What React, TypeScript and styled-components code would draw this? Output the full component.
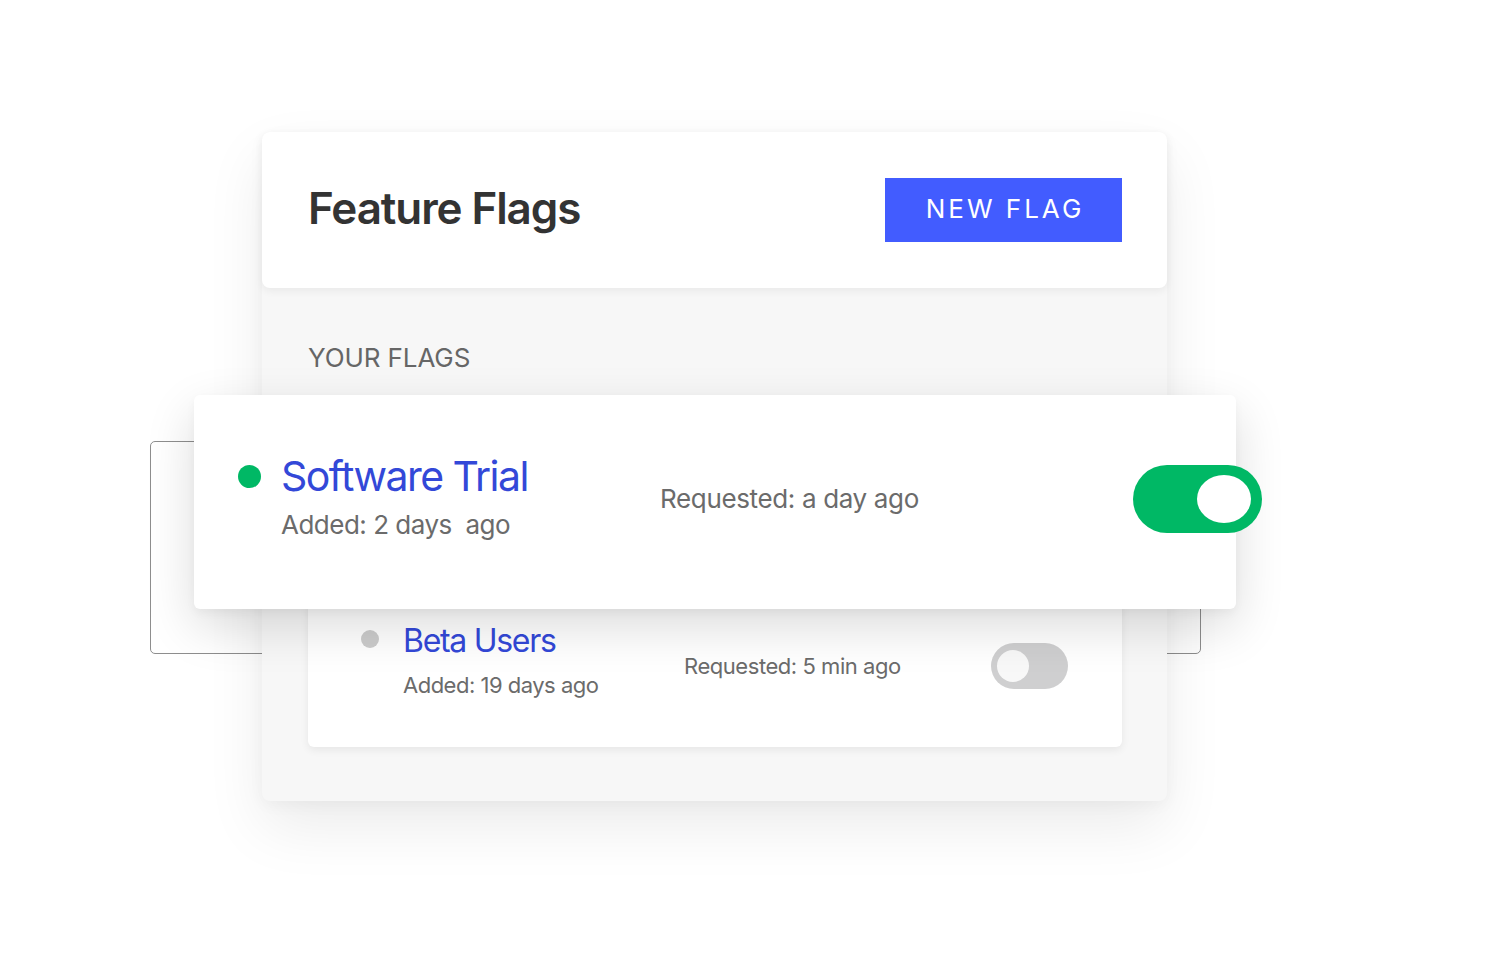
import React from "react";
import styled, { createGlobalStyle } from "styled-components";

const Global = createGlobalStyle`
  html, body { margin: 0; padding: 0; background: #ffffff; }
  body { font-family: Inter, "Liberation Sans", Arial, sans-serif; -webkit-font-smoothing: antialiased; }
  * { box-sizing: border-box; }
`;

const Page = styled.div`
  width: 1498px;
  height: 954px;
  padding: 132px 0 0 262px;
  background: #ffffff;
`;

const Scene = styled.div`
  position: relative;
  width: 905px;
`;

const Outline = styled.div`
  position: absolute;
  left: -112px;
  top: 309px;
  width: 1051px;
  height: 213px;
  border: 1px solid #8e8e8e;
  border-radius: 5px;
`;

const Panel = styled.section`
  position: relative;
  width: 905px;
  height: 669px;
  background: #f7f7f7;
  border-radius: 8px;
  box-shadow: 0 26px 60px rgba(0, 0, 0, 0.08), 0 4px 16px rgba(0, 0, 0, 0.04);
`;

const Header = styled.header`
  height: 156px;
  display: flex;
  align-items: center;
  justify-content: space-between;
  padding: 0 45px 0 46px;
  background: #ffffff;
  border-radius: 8px;
  box-shadow: 0 3px 8px rgba(0, 0, 0, 0.06);
`;

const Title = styled.h1`
  margin: 0 0 4px;
  font-size: 44px;
  font-weight: 600;
  letter-spacing: -1.1px;
  color: #333333;
  line-height: 52px;
`;

const Button = styled.button`
  width: 237px;
  height: 64px;
  border: none;
  border-radius: 0;
  background: #425cff;
  color: #ffffff;
  font-family: inherit;
  font-size: 26px;
  font-weight: 400;
  letter-spacing: 3px;
  padding: 0 0 3px 3px;
`;

const Body = styled.div`
  padding: 55px 45px 54px 46px;
`;

const SectionLabel = styled.h2`
  margin: 0 0 22px;
  font-size: 26px;
  font-weight: 400;
  line-height: 30px;
  letter-spacing: -0.1px;
  color: #666666;
`;

const Card = styled.div<{ $featured?: boolean }>`
  position: relative;
  display: flex;
  align-items: flex-start;
  background: #ffffff;
  border-radius: 6px;
  z-index: ${(p) => (p.$featured ? 2 : 1)};
  margin: ${(p) => (p.$featured ? "0 -114px" : "-27px 0 0")};
  height: ${(p) => (p.$featured ? "214px" : "165px")};
  padding: ${(p) => (p.$featured ? "57px 0 0 44px" : "40px 54px 0 53px")};
  box-shadow: ${(p) =>
    p.$featured
      ? "0 18px 50px rgba(0, 0, 0, 0.14), 0 4px 10px rgba(0, 0, 0, 0.04)"
      : "0 3px 8px rgba(0, 0, 0, 0.07)"};
`;

const Dot = styled.span<{ $on?: boolean }>`
  flex: none;
  width: ${(p) => (p.$on ? "23px" : "18px")};
  height: ${(p) => (p.$on ? "23px" : "18px")};
  margin-top: ${(p) => (p.$on ? "13px" : "8px")};
  border-radius: 50%;
  background: ${(p) => (p.$on ? "#00b865" : "#cccccc")};
`;

const TextCol = styled.div<{ $featured?: boolean }>`
  flex: none;
  display: flex;
  flex-direction: column;
  width: ${(p) => (p.$featured ? "399px" : "305px")};
  padding-left: ${(p) => (p.$featured ? "20px" : "24px")};
`;

const Name = styled.div<{ $featured?: boolean }>`
  color: #3348d8;
  font-size: ${(p) => (p.$featured ? "41px" : "32px")};
  line-height: ${(p) => (p.$featured ? "48px" : "38px")};
  font-weight: 400;
  letter-spacing: ${(p) => (p.$featured ? "-1.55px" : "-1.3px")};
`;

const Added = styled.div<{ $featured?: boolean }>`
  color: #6b6b6b;
  font-size: ${(p) => (p.$featured ? "26px" : "22px")};
  line-height: ${(p) => (p.$featured ? "30px" : "26px")};
  margin-top: ${(p) => (p.$featured ? "10px" : "12px")};
  letter-spacing: -0.5px;
  white-space: pre;
`;

const Requested = styled.div<{ $featured?: boolean }>`
  color: #6b6b6b;
  font-size: ${(p) => (p.$featured ? "26px" : "22px")};
  line-height: ${(p) => (p.$featured ? "30px" : "26px")};
  margin-top: ${(p) => (p.$featured ? "32px" : "31px")};
  letter-spacing: ${(p) => (p.$featured ? "-0.35px" : "-0.45px")};
`;

const Toggle = styled.div<{ $on?: boolean }>`
  flex: none;
  margin-left: auto;
  display: flex;
  align-items: center;
  justify-content: ${(p) => (p.$on ? "flex-end" : "flex-start")};
  width: ${(p) => (p.$on ? "129px" : "77px")};
  height: ${(p) => (p.$on ? "68px" : "46px")};
  margin-top: ${(p) => (p.$on ? "13px" : "21px")};
  margin-right: ${(p) => (p.$on ? "-26px" : "0")};
  padding: ${(p) => (p.$on ? "0 11px" : "0 6px")};
  border-radius: 999px;
  background: ${(p) => (p.$on ? "#00b865" : "#cfcfd0")};
`;

const Knob = styled.span<{ $on?: boolean }>`
  display: block;
  width: ${(p) => (p.$on ? "54px" : "32px")};
  height: ${(p) => (p.$on ? "48px" : "32px")};
  border-radius: 50%;
  background: ${(p) => (p.$on ? "#ffffff" : "#f8f8f8")};
`;

type Flag = {
  name: string;
  added: string;
  requested: string;
  on: boolean;
  featured?: boolean;
};

const flags: Flag[] = [
  { name: "Software Trial", added: "Added: 2 days  ago", requested: "Requested: a day ago", on: true, featured: true },
  { name: "Beta Users", added: "Added: 19 days ago", requested: "Requested: 5 min ago", on: false },
];

function FlagRow({ flag }: { flag: Flag }) {
  const f = !!flag.featured;
  return (
    <Card $featured={f}>
      <Dot $on={flag.on} />
      <TextCol $featured={f}>
        <Name $featured={f}>{flag.name}</Name>
        <Added $featured={f}>{flag.added}</Added>
      </TextCol>
      <Requested $featured={f}>{flag.requested}</Requested>
      <Toggle $on={flag.on}>
        <Knob $on={flag.on} />
      </Toggle>
    </Card>
  );
}

export default function App() {
  return (
    <>
      <Global />
      <Page>
        <Scene>
          <Outline />
          <Panel>
            <Header>
              <Title>Feature Flags</Title>
              <Button>NEW FLAG</Button>
            </Header>
            <Body>
              <SectionLabel>YOUR FLAGS</SectionLabel>
              {flags.map((f) => (
                <FlagRow key={f.name} flag={f} />
              ))}
            </Body>
          </Panel>
        </Scene>
      </Page>
    </>
  );
}
